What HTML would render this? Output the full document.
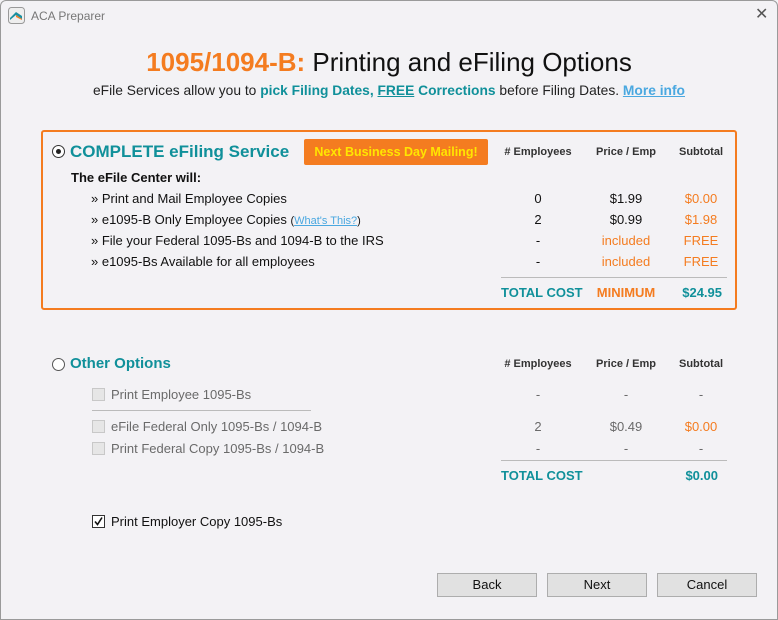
<!DOCTYPE html>
<html><head><meta charset="utf-8"><style>
*{margin:0;padding:0;box-sizing:border-box}
body{width:778px;height:620px;background:#f3f2f5;font-family:"Liberation Sans","DejaVu Sans",sans-serif;position:relative;overflow:hidden;color:#111}
.a{position:absolute;white-space:nowrap;line-height:1}
.t{color:#10909a}
.o{color:#f47c20}
.g{color:#6a6a6a}
.b{font-weight:bold}
.c{transform:translateX(-50%)}
.r{transform:translateX(-100%)}
.cb{position:absolute;width:13px;height:13px;border:1px solid #c8c8c8;background:#e6e6e6}
.rad{position:absolute;width:13px;height:13px;border:1px solid #333;border-radius:50%;background:#fff}
.btn{position:absolute;top:573px;width:100px;height:24px;background:#e1e1e1;border:1px solid #adadad;font-size:13px;text-align:center;line-height:22px}
.hd{font-size:11px;font-weight:bold;color:#333}
.row{font-size:13px}
</style></head><body>
<div style="position:absolute;left:0;top:0;width:778px;height:620px;border:1px solid #9a9a9a;border-radius:6px 6px 0 0"></div>
<svg class="a" style="left:8px;top:7px" width="17" height="17" viewBox="0 0 17 17"><rect x="0.5" y="0.5" width="16" height="16" rx="3" fill="#eee" stroke="#999"/><path d="M2 11 L8 5 L14 9 L14 12 L8 8 L2 13Z" fill="#1a8fa0"/><path d="M8 8 L14 12 L14 13 L8 10Z" fill="#f47c20"/></svg>
<div class="a" style="left:31px;top:10px;font-size:12px;color:#777">ACA Preparer</div>
<div class="a" style="left:755px;top:7px;font-size:16px;color:#555">✕</div>

<div class="a c" style="left:389px;top:49px;font-size:26px"><span class="o b">1095/1094-B:</span> Printing and eFiling Options</div>
<div class="a c" style="left:389px;top:84px;font-size:13.8px;font-weight:bold;color:#222"><span style="font-weight:normal">eFile Services allow you to</span> <span class="t">pick Filing Dates, <u>FREE</u> Corrections</span> <span style="font-weight:normal">before Filing Dates.</span> <u style="color:#4aa8e0">More info</u></div>

<div style="position:absolute;left:41px;top:130px;width:696px;height:180px;border:2px solid #f47c20;border-radius:3px"></div>
<div class="rad" style="left:52px;top:145px"><div style="position:absolute;left:3px;top:3px;width:5px;height:5px;border-radius:50%;background:#222"></div></div>
<div class="a t b" style="left:70px;top:143px;font-size:17px">COMPLETE eFiling Service</div>
<div class="a b" style="left:304px;top:139px;width:184px;height:26px;background:#f47c20;border-radius:2px;color:#ffe600;font-size:12.5px;text-align:center;line-height:26px">Next Business Day Mailing!</div>
<div class="a hd c" style="left:538px;top:147px">#&nbsp;Employees</div>
<div class="a hd c" style="left:626px;top:147px">Price / Emp</div>
<div class="a hd c" style="left:701px;top:147px">Subtotal</div>
<div class="a b" style="left:71px;top:171px;font-size:13px">The eFile Center will:</div>
<div class="a row" style="left:91px;top:192px">» Print and Mail Employee Copies</div>
<div class="a row" style="left:91px;top:213px">» e1095-B Only Employee Copies <span style="font-size:11px">(<u style="color:#4aa8e0">What's This?</u>)</span></div>
<div class="a row" style="left:91px;top:234px">» File your Federal 1095-Bs and 1094-B to the IRS</div>
<div class="a row" style="left:91px;top:255px">» e1095-Bs Available for all employees</div>
<div class="a row c" style="left:538px;top:192px">0</div><div class="a row c" style="left:626px;top:192px">$1.99</div><div class="a row c o" style="left:701px;top:192px">$0.00</div>
<div class="a row c" style="left:538px;top:213px">2</div><div class="a row c" style="left:626px;top:213px">$0.99</div><div class="a row c o" style="left:701px;top:213px">$1.98</div>
<div class="a row c" style="left:538px;top:234px">-</div><div class="a row c o" style="left:626px;top:234px">included</div><div class="a row c o" style="left:701px;top:234px">FREE</div>
<div class="a row c" style="left:538px;top:255px">-</div><div class="a row c o" style="left:626px;top:255px">included</div><div class="a row c o" style="left:701px;top:255px">FREE</div>
<div style="position:absolute;left:501px;top:277px;width:226px;height:1px;background:#bbb"></div>
<div class="a t b" style="left:501px;top:286px;font-size:13px">TOTAL COST</div>
<div class="a o b c" style="left:626px;top:286px;font-size:13px">MINIMUM</div>
<div class="a t b r" style="left:722px;top:286px;font-size:13px">$24.95</div>

<div class="rad" style="left:52px;top:358px;border-color:#555"></div>
<div class="a t b" style="left:70px;top:356px;font-size:15px">Other Options</div>
<div class="a hd c" style="left:538px;top:359px">#&nbsp;Employees</div>
<div class="a hd c" style="left:626px;top:359px">Price / Emp</div>
<div class="a hd c" style="left:701px;top:359px">Subtotal</div>
<div class="cb" style="left:92px;top:388px"></div>
<div class="a row g" style="left:111px;top:388px">Print Employee 1095-Bs</div>
<div class="a row g c" style="left:538px;top:388px">-</div><div class="a row g c" style="left:626px;top:388px">-</div><div class="a row g c" style="left:701px;top:388px">-</div>
<div style="position:absolute;left:92px;top:410px;width:219px;height:1px;background:#bbb"></div>
<div class="cb" style="left:92px;top:420px"></div>
<div class="a row g" style="left:111px;top:420px">eFile Federal Only 1095-Bs / 1094-B</div>
<div class="a row g c" style="left:538px;top:420px">2</div><div class="a row g c" style="left:626px;top:420px">$0.49</div><div class="a row o c" style="left:701px;top:420px">$0.00</div>
<div class="cb" style="left:92px;top:442px"></div>
<div class="a row g" style="left:111px;top:442px">Print Federal Copy 1095-Bs / 1094-B</div>
<div class="a row g c" style="left:538px;top:442px">-</div><div class="a row g c" style="left:626px;top:442px">-</div><div class="a row g c" style="left:701px;top:442px">-</div>
<div style="position:absolute;left:501px;top:460px;width:226px;height:1px;background:#bbb"></div>
<div class="a t b" style="left:501px;top:469px;font-size:13px">TOTAL COST</div>
<div class="a t b r" style="left:718px;top:469px;font-size:13px">$0.00</div>

<div class="cb" style="left:92px;top:515px;border-color:#333;background:#fff"><svg width="11" height="11" style="position:absolute;left:0;top:0"><path d="M2 5.5 L4.5 8.5 L9 1.5" fill="none" stroke="#111" stroke-width="1.6"/></svg></div>
<div class="a row" style="left:111px;top:515px">Print Employer Copy 1095-Bs</div>

<div class="btn" style="left:437px">Back</div>
<div class="btn" style="left:547px">Next</div>
<div class="btn" style="left:657px">Cancel</div>
</body></html>
